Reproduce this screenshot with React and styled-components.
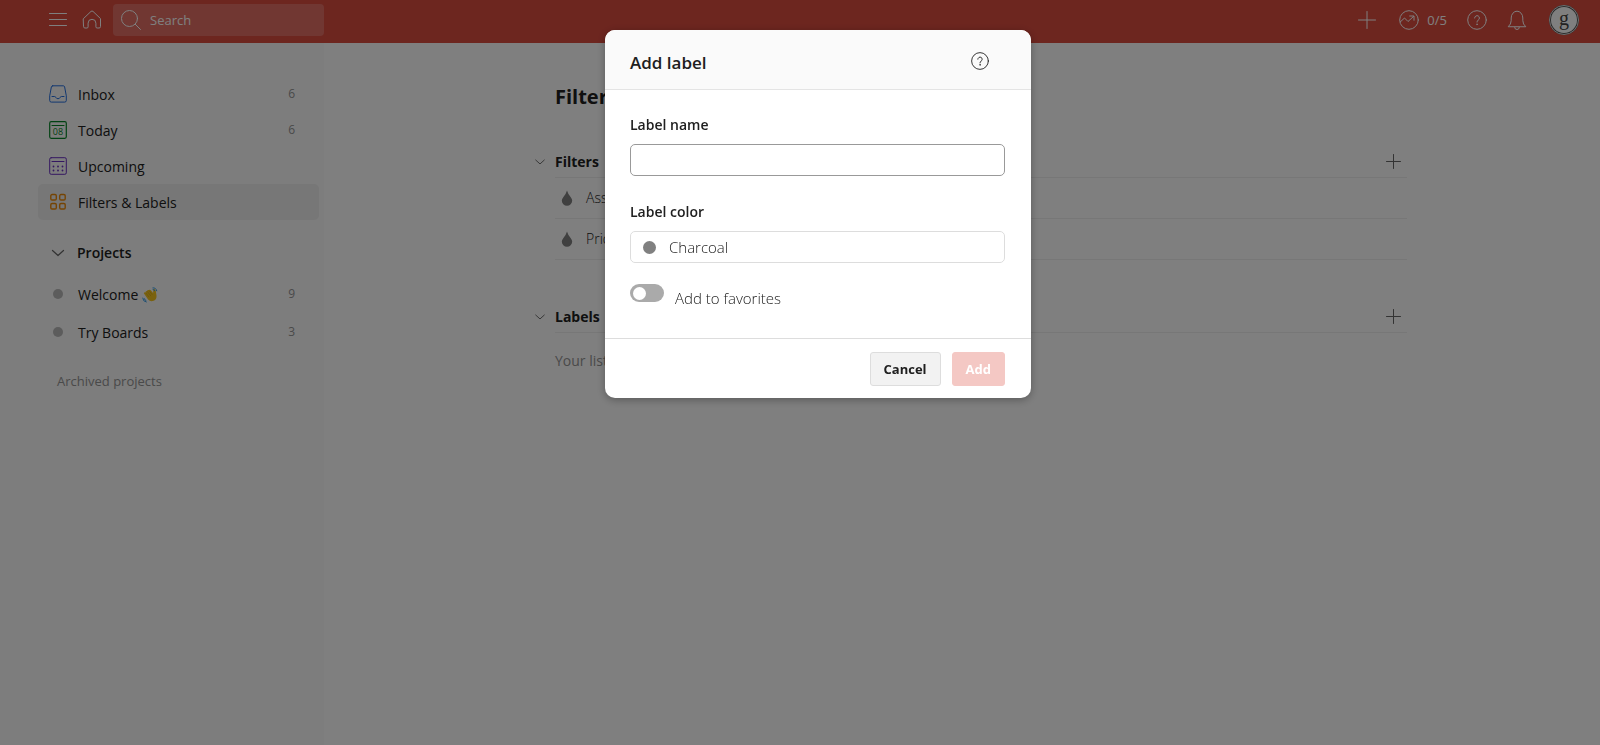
import React, { useState } from 'react';
import styled, { createGlobalStyle } from 'styled-components';

const colors = {
  red: '#db4c3f',
  text: '#202020',
  muted: '#949494',
  line: '#eeeeee',
};

const GlobalStyle = createGlobalStyle`
  * {
    box-sizing: border-box;
  }

  body {
    margin: 0;
    background-color: #fff;
    color: ${colors.text};
    font-family: 'Open Sans', 'Noto Sans', sans-serif;
    font-size: 14px;
    line-height: 20px;
  }

  h1, h2, ul, p {
    margin: 0;
    padding: 0;
  }

  button, input, select {
    font: inherit;
    color: inherit;
  }

  svg {
    display: block;
    flex-shrink: 0;
  }
`;

const Page = styled.div`
  display: flex;
  flex-direction: column;
  min-height: 100vh;
`;

const TopBar = styled.header`
  display: flex;
  justify-content: space-between;
  align-items: flex-start;
  height: 43px;
  padding: 3px 21px 0 48px;
  background-color: ${colors.red};
  color: #fff;
`;

const BarGroup = styled.div`
  display: flex;
  align-items: center;
  height: 34px;
  gap: ${props => props.$gap};
`;

const IconButton = styled.button`
  display: flex;
  align-items: center;
  padding: ${props => props.$padding || 0};
  border: none;
  background: none;
  color: ${props => props.$color || 'inherit'};
  cursor: pointer;
`;

const SearchBox = styled.label`
  display: flex;
  align-items: center;
  gap: 9px;
  width: 211px;
  height: 32px;
  margin-left: -3px;
  padding: 0 8px;
  border-radius: 4px;
  background-color: rgba(255, 255, 255, 0.2);
`;

const SearchInput = styled.input`
  width: 100%;
  padding: 0;
  border: none;
  outline: none;
  background: none;
  font-size: 13px;

  &::placeholder {
    color: #fff;
    opacity: 1;
  }
`;

const Productivity = styled(IconButton)`
  gap: 8px;
  font-size: 13px;
`;

const Avatar = styled.button`
  width: 30px;
  height: 30px;
  margin-left: 2px;
  padding: 0 0 4px;
  border: 2px solid #555;
  outline: 1px solid #ddd;
  outline-offset: -1px;
  border-radius: 50%;
  background-color: #fff;
  color: #444;
  font-family: 'Liberation Serif', serif;
  font-size: 20px;
  line-height: 20px;
`;

const Body = styled.div`
  display: flex;
  flex: 1;
`;

const Sidebar = styled.nav`
  width: 324px;
  flex-shrink: 0;
  padding: 33px 5px 0 38px;
  background-color: #fafafa;
`;

const List = styled.ul`
  list-style: none;
`;

const NavItem = styled.a`
  display: flex;
  align-items: center;
  gap: 11px;
  height: ${props => (props.$tall ? '38px' : '36px')};
  padding: 0 24px 0 11px;
  border-radius: 5px;
  background-color: ${props => (props.$active ? '#eeeeee' : 'transparent')};
  color: ${colors.text};
  text-decoration: none;
`;

const ItemName = styled.span`
  display: flex;
  align-items: center;
  gap: 4px;
  flex: 1;
  padding-top: 1px;
`;

const Count = styled.span`
  color: ${colors.muted};
  font-size: 12px;
`;

const ProjectsHeading = styled.h2`
  display: flex;
  align-items: center;
  gap: 10px;
  height: 38px;
  margin: 14px 0 3px;
  padding-left: 11px;
  font-size: 14px;
  font-weight: 600;
`;

const Dot = styled.span`
  flex-shrink: 0;
  width: ${props => props.$size};
  height: ${props => props.$size};
  margin: ${props => props.$margin || 0};
  border-radius: 50%;
  background-color: ${props => props.$color};
`;

const ArchivedLink = styled.a`
  display: block;
  margin-top: 20px;
  padding-left: 19px;
  color: ${colors.muted};
  font-size: 13px;
  text-decoration: none;
`;

const Main = styled.main`
  flex: 1;
  padding: 39px 57px 0 73px;
`;

const Content = styled.div`
  max-width: 874px;
  margin: 0 auto;
`;

const Title = styled.h1`
  margin-left: 22px;
  font-size: 20px;
  line-height: 30px;
  font-weight: 700;
`;

const Section = styled.section`
  margin-top: ${props => props.$top};
`;

const SectionHeader = styled.div`
  display: grid;
  grid-template-columns: 22px 1fr;
`;

const SectionTitle = styled.div`
  display: flex;
  justify-content: space-between;
  align-items: center;
  height: 32px;
  padding-right: 6px;
  border-bottom: 1px solid ${colors.line};

  h2 {
    font-size: 14px;
    font-weight: 700;
  }
`;

const FilterItem = styled.li`
  display: flex;
  align-items: center;
  gap: 12px;
  height: 41px;
  margin-left: 22px;
  padding-left: 5px;
  border-bottom: 1px solid ${colors.line};
  font-weight: 300;
`;

const Empty = styled.p`
  margin: 18px 0 0 22px;
  color: ${colors.muted};
`;

const Overlay = styled.div`
  position: fixed;
  inset: 0;
  display: flex;
  justify-content: center;
  align-items: flex-start;
  padding: 30px 0 0 36px;
  background-color: rgba(0, 0, 0, 0.5);
`;

const Dialog = styled.form`
  width: 426px;
  border-radius: 10px;
  overflow: hidden;
  background-color: #fff;
  box-shadow: 0 2px 8px rgba(0, 0, 0, 0.3);
`;

const DialogHeader = styled.div`
  display: flex;
  justify-content: space-between;
  align-items: center;
  height: 60px;
  padding: 3px 42px 0 25px;
  border-bottom: 1px solid #e4e4e4;
  background-color: #fafafa;

  h2 {
    padding-top: 4px;
    font-size: 17px;
    line-height: 24px;
    font-weight: 600;
  }
`;

const Fields = styled.div`
  display: flex;
  flex-direction: column;
  padding: 25px 26px 30px 25px;
`;

const FieldLabel = styled.label`
  margin-bottom: 9px;
  font-weight: 600;
`;

const NameInput = styled.input`
  height: 32px;
  margin-bottom: 26px;
  padding: 0 10px;
  border: 1px solid #999;
  border-radius: 5px;
  outline: none;
`;

const ColorField = styled.div`
  display: flex;
  align-items: center;
  gap: 13px;
  height: 32px;
  padding: 0 12px;
  border: 1px solid #ddd;
  border-radius: 5px;
`;

const ColorSelect = styled.select`
  flex: 1;
  appearance: none;
  padding: 0;
  border: none;
  outline: none;
  background: none;
  font-size: 15px;
  font-weight: 300;
`;

const Favorite = styled.label`
  display: flex;
  align-items: flex-end;
  gap: 11px;
  margin-top: 21px;
  font-size: 15px;
  font-weight: 300;
`;

const Switch = styled.input`
  appearance: none;
  display: flex;
  align-items: center;
  width: 34px;
  height: 18px;
  margin: 0 0 6px;
  padding: 3px;
  border-radius: 9px;
  background-color: #aaa;

  &::before {
    content: '';
    width: 13px;
    height: 13px;
    border-radius: 50%;
    background-color: #fff;
  }

  &:checked {
    justify-content: flex-end;
    background-color: #25b84c;
  }
`;

const DialogFooter = styled.div`
  display: flex;
  justify-content: flex-end;
  gap: 11px;
  padding: 13px 26px 12px;
  border-top: 1px solid #ddd;
`;

const Button = styled.button`
  height: 34px;
  padding: 0 13px;
  border: 1px solid ${props => (props.$primary ? '#f4c8c4' : '#ddd')};
  border-radius: 3px;
  background-color: ${props => (props.$primary ? '#f4c8c4' : '#f2f2f2')};
  color: ${props => (props.$primary ? '#fff' : colors.text)};
  font-size: 13px;
  font-weight: 700;
`;

const Icon = ({ size = 20, color = 'currentColor', children }) => (
  <svg width={size} height={size} viewBox={`0 0 ${size} ${size}`} fill="none" stroke={color} strokeLinecap="round" strokeLinejoin="round" aria-hidden="true">
    {children}
  </svg>
);

const MenuIcon = () => (
  <Icon>
    <path d="M1.5 3.5h17M1.5 9.5h17M1.5 15.5h17" />
  </Icon>
);

const HomeIcon = () => (
  <Icon>
    <path d="M1.5 8.6 9 1.4q1-.8 2 0l7.5 7.2v8q0 1.4-1.4 1.4h-2q-1.2 0-1.2-1.2v-3.6a3.9 3.9 0 0 0-7.8 0v3.6Q6.1 18 4.9 18h-2q-1.4 0-1.4-1.4z" />
  </Icon>
);

const SearchIcon = () => (
  <Icon>
    <circle cx="8.5" cy="8.5" r="8" />
    <path d="m14.3 14.3 5.2 5.2" />
  </Icon>
);

const PlusIcon = ({ size = 18 }) => (
  <Icon size={size}>
    <path d={`M${size / 2} .5V${size - 0.5}M.5 ${size / 2}H${size - 0.5}`} />
  </Icon>
);

const TrendIcon = () => (
  <Icon>
    <circle cx="10" cy="10" r="9.3" />
    <path d="m1.200 12 4.300-4 3.500 3.500 5.500-5M10.700 6h4.300v4.300" />
  </Icon>
);

const HelpIcon = ({ size = 20 }) => (
  <svg width={size} height={size} viewBox="0 0 20 20" fill="none" stroke="currentColor" strokeLinecap="round" aria-hidden="true">
    <circle cx="10" cy="10" r="9.3" />
    <path d="M7.6 8a2.4 2.4 0 1 1 3.6 2.1q-1.2.7-1.2 2" />
    <circle cx="10" cy="14.3" r=".5" fill="currentColor" strokeWidth=".6" />
  </svg>
);

const BellIcon = () => (
  <Icon>
    <path d="M1.5 16.5q2.7-2.2 2.7-6V8a5.8 6.8 0 0 1 11.600 0v2.500q0 3.800 2.700 6zM7.700 17.500a2.300 2 0 0 0 4.600 0" />
  </Icon>
);

const ChevronIcon = ({ size = 18 }) => (
  <svg width={size} height={size} viewBox="0 0 18 18" fill="none" stroke="#666" strokeLinecap="round" strokeLinejoin="round" aria-hidden="true">
    <path d="m3.5 6.5 5.5 5 5.5-5" strokeWidth="1.2" />
  </svg>
);

const InboxIcon = () => (
  <Icon size={18} color="#246fe0">
    <path d="M3.7.8h10.6q1 0 1.300 1l1.700 9v4.700q0 1.600-1.600 1.600H2.300q-1.600 0-1.600-1.600v-4.700l1.700-9q.3-1 1.300-1zM3 11.500h2.600q1 0 1.400 1.200.5 1 2 1t2-1q.4-1.200 1.400-1.200H15" />
  </Icon>
);

const TodayIcon = () => (
  <Icon size={18} color="#058527">
    <rect x=".7" y=".7" width="16.6" height="16.6" rx="1.5" strokeWidth="1.2" />
    <path d="M3 4.5h12" />
    <text x="9" y="14.2" textAnchor="middle" fontSize="9" fill="#058527" stroke="none">08</text>
  </Icon>
);

const UpcomingIcon = () => (
  <Icon size={18} color="#692fc2">
    <rect x=".7" y=".7" width="16.6" height="16.6" rx="1.5" />
    <path d="M3 4.5h12" />
    <path d="M4.5 9.5h.01M9 9.5h.01M13.5 9.5h.01M4.5 13.5h.01M9 13.5h.01M13.5 13.5h.01" strokeWidth="1.8" />
  </Icon>
);

const GridIcon = () => (
  <Icon size={18} color="#eb8909">
    <g strokeWidth="1.4">
      <rect x="1.8" y="1.5" width="5.5" height="5.5" rx="1.3" />
      <rect x="10.7" y="1.5" width="5.5" height="5.5" rx="1.3" />
      <rect x="1.8" y="10.5" width="5.5" height="5.5" rx="1.3" />
      <rect x="10.7" y="10.5" width="5.5" height="5.5" rx="1.3" />
    </g>
  </Icon>
);

const DropIcon = () => (
  <svg width="14" height="18" viewBox="0 0 14 18" fill="#808080" aria-hidden="true">
    <path d="M7 1.5q.7 2.900 3.600 6.400 1.600 2 1.600 3.700a5.200 5.200 0 0 1-10.400 0q0-1.700 1.600-3.700Q6.300 4.400 7 1.500z" />
  </svg>
);

const WaveIcon = () => (
  <svg width="16" height="16" viewBox="0 0 16 16" role="img" aria-label="waving hand">
    <path d="M1.800 6.300q.6-1.500 1.800-.7-.3-1.900 1.500-1.600.2-1.600 1.700-.9 1-1 2 .2l2.300 2.700.2-2.800q.5-1.700 1.900-.8.7.7.6 2.200l.7 3.900q.4 3.800-2.800 5.300-3.200 1.300-5.600-1.200z" fill="#f5c51e" />
    <path d="m3.700 5.800 3.500 4.400M5.300 4.400l3.600 4.700M7 3.500l3.300 4.300" fill="none" stroke="#c79412" strokeWidth=".5" />
    <path d="M10.500.9q3.600-.4 4.300 3.300M10.700 2.500q1.700 0 2.200 1.600M.7 10.700q.2 3.900 4 4.400M2.300 11.300q.2 1.900 2 2.400" fill="none" stroke="#3b9fe5" />
  </svg>
);

const views = [
  { name: 'Inbox', icon: <InboxIcon />, count: 6 },
  { name: 'Today', icon: <TodayIcon />, count: 6 },
  { name: 'Upcoming', icon: <UpcomingIcon /> },
  { name: 'Filters & Labels', icon: <GridIcon />, active: true },
];

const projects = [
  { name: 'Welcome', emoji: <WaveIcon />, count: 9 },
  { name: 'Try Boards', count: 3 },
];

const filters = ['Assigned to me', 'Priority 1'];

const ListSection = ({ title, top, children }) => (
  <Section $top={top}>
    <SectionHeader>
      <IconButton type="button" aria-label={`Collapse ${title}`}>
        <ChevronIcon size={14} />
      </IconButton>
      <SectionTitle>
        <h2>{title}</h2>
        <IconButton type="button" aria-label={`Add to ${title}`} $color="#666">
          <PlusIcon size={15} />
        </IconButton>
      </SectionTitle>
    </SectionHeader>
    {children}
  </Section>
);

const AddLabelDialog = () => {
  const [name, setName] = useState('');
  const [favorite, setFavorite] = useState(false);

  return (
    <Overlay>
      <Dialog role="dialog" aria-labelledby="dialog-title" onSubmit={e => e.preventDefault()}>
        <DialogHeader>
          <h2 id="dialog-title">Add label</h2>
          <IconButton type="button" aria-label="Help">
            <HelpIcon size={18} />
          </IconButton>
        </DialogHeader>
        <Fields>
          <FieldLabel htmlFor="label-name">Label name</FieldLabel>
          <NameInput id="label-name" value={name} onChange={e => setName(e.target.value)} />
          <FieldLabel htmlFor="label-color">Label color</FieldLabel>
          <ColorField>
            <Dot $size="13px" $color="#808080" />
            <ColorSelect id="label-color" defaultValue="Charcoal">
              <option>Charcoal</option>
            </ColorSelect>
          </ColorField>
          <Favorite>
            <Switch type="checkbox" role="switch" checked={favorite} onChange={e => setFavorite(e.target.checked)} />
            Add to favorites
          </Favorite>
        </Fields>
        <DialogFooter>
          <Button type="button">Cancel</Button>
          <Button type="submit" $primary>Add</Button>
        </DialogFooter>
      </Dialog>
    </Overlay>
  );
};

const App = () => {
  return (
    <>
      <GlobalStyle />
      <Page>
        <TopBar>
          <BarGroup $gap="14px">
            <IconButton type="button" aria-label="Menu"><MenuIcon /></IconButton>
            <IconButton type="button" aria-label="Home"><HomeIcon /></IconButton>
            <SearchBox>
              <SearchIcon />
              <SearchInput type="search" placeholder="Search" aria-label="Search" />
            </SearchBox>
          </BarGroup>
          <BarGroup $gap="20px">
            <IconButton type="button" aria-label="Add task" $padding="0 3px"><PlusIcon /></IconButton>
            <Productivity type="button"><TrendIcon />0/5</Productivity>
            <IconButton type="button" aria-label="Help"><HelpIcon /></IconButton>
            <IconButton type="button" aria-label="Notifications"><BellIcon /></IconButton>
            <Avatar type="button">g</Avatar>
          </BarGroup>
        </TopBar>
        <Body>
          <Sidebar>
            <List>
              {views.map(view => (
                <li key={view.name}>
                  <NavItem href="#" $active={view.active}>
                    {view.icon}
                    <ItemName>{view.name}</ItemName>
                    <Count>{view.count}</Count>
                  </NavItem>
                </li>
              ))}
            </List>
            <ProjectsHeading>
              <ChevronIcon />
              Projects
            </ProjectsHeading>
            <List>
              {projects.map(project => (
                <li key={project.name}>
                  <NavItem href="#" $tall>
                    <Dot $size="10px" $margin="0 4px" $color="#b8b8b8" />
                    <ItemName>{project.name}{project.emoji}</ItemName>
                    <Count>{project.count}</Count>
                  </NavItem>
                </li>
              ))}
            </List>
            <ArchivedLink href="#">Archived projects</ArchivedLink>
          </Sidebar>
          <Main>
            <Content>
              <Title>Filters & Labels</Title>
              <ListSection title="Filters" top="34px">
                <List>
                  {filters.map(filter => (
                    <FilterItem key={filter}>
                      <DropIcon />
                      {filter}
                    </FilterItem>
                  ))}
                </List>
              </ListSection>
              <ListSection title="Labels" top="41px">
                <Empty>Your list of labels will show up here.</Empty>
              </ListSection>
            </Content>
          </Main>
        </Body>
      </Page>
      <AddLabelDialog />
    </>
  );
};

export default App;
